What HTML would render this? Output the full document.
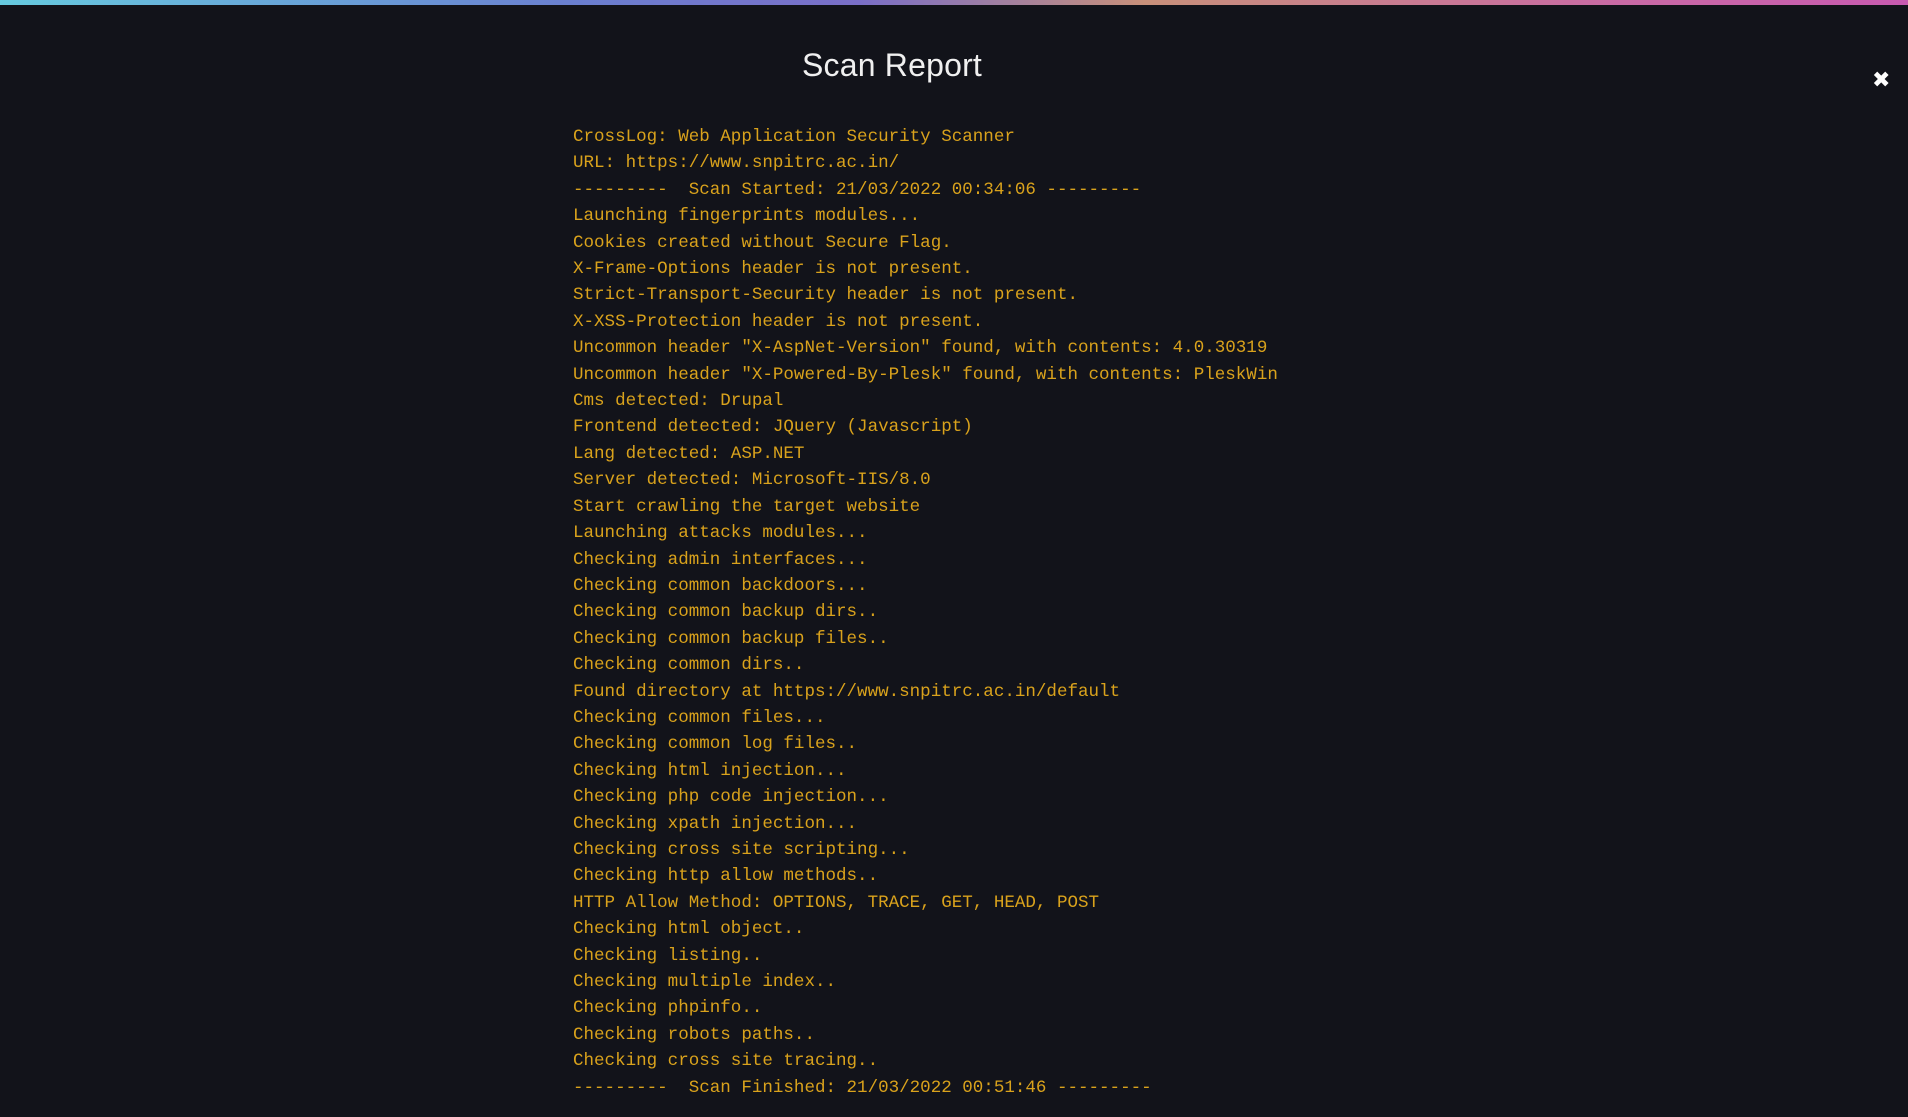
<!DOCTYPE html>
<html><head><meta charset="utf-8"><style>
html,body{margin:0;padding:0;width:1908px;height:1117px;overflow:hidden;background:#12131a;}
.bar{position:absolute;left:0;top:0;width:1908px;height:5px;background:linear-gradient(90deg,#67cbe0,#6a7fd0 30%,#7a6fc8 45%,#c8907a 60%,#c96aa5 85%,#c85ab0);}
h1{position:absolute;left:0;width:1784px;top:47px;margin:0;text-align:center;font:300 32px "Liberation Sans",sans-serif;color:#f0f0f0;letter-spacing:0.2px;}
.x{position:absolute;left:1872px;top:68px;color:#fff;font:bold 22px "DejaVu Sans",sans-serif;}
pre{position:absolute;left:573px;top:124px;margin:0;font:17.55px/26.4px "Liberation Mono",monospace;color:#d9a21c;}
</style></head><body>
<div class="bar"></div>
<h1>Scan Report</h1>
<div class="x">✖</div>
<pre>CrossLog: Web Application Security Scanner
URL: https://www.snpitrc.ac.in/
---------  Scan Started: 21/03/2022 00:34:06 ---------
Launching fingerprints modules...
Cookies created without Secure Flag.
X-Frame-Options header is not present.
Strict-Transport-Security header is not present.
X-XSS-Protection header is not present.
Uncommon header "X-AspNet-Version" found, with contents: 4.0.30319
Uncommon header "X-Powered-By-Plesk" found, with contents: PleskWin
Cms detected: Drupal
Frontend detected: JQuery (Javascript)
Lang detected: ASP.NET
Server detected: Microsoft-IIS/8.0
Start crawling the target website
Launching attacks modules...
Checking admin interfaces...
Checking common backdoors...
Checking common backup dirs..
Checking common backup files..
Checking common dirs..
Found directory at https://www.snpitrc.ac.in/default
Checking common files...
Checking common log files..
Checking html injection...
Checking php code injection...
Checking xpath injection...
Checking cross site scripting...
Checking http allow methods..
HTTP Allow Method: OPTIONS, TRACE, GET, HEAD, POST
Checking html object..
Checking listing..
Checking multiple index..
Checking phpinfo..
Checking robots paths..
Checking cross site tracing..
---------  Scan Finished: 21/03/2022 00:51:46 ---------</pre>
</body></html>
